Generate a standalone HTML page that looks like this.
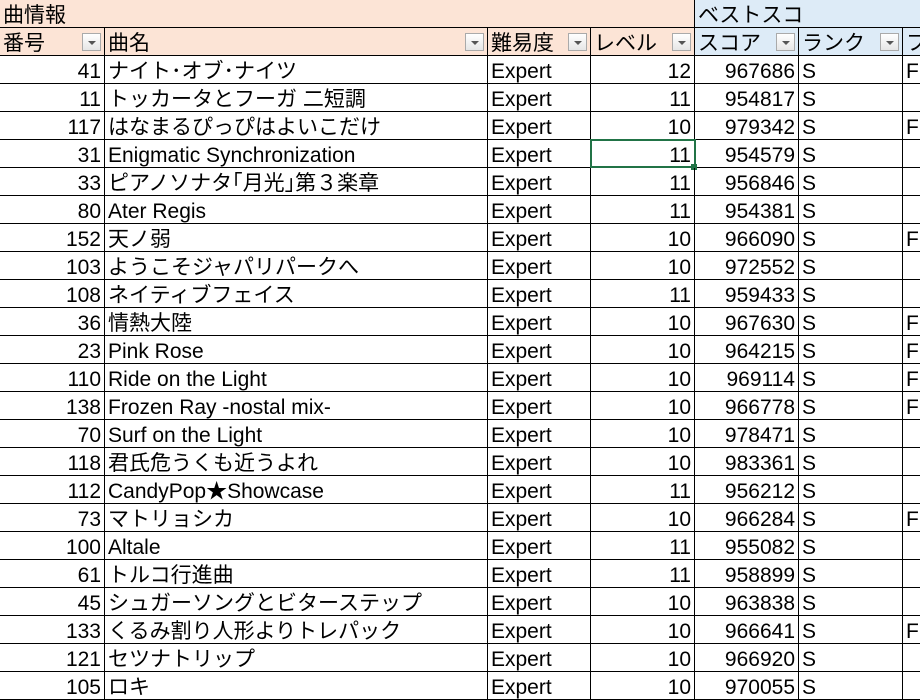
<!DOCTYPE html>
<html><head><meta charset="utf-8"><style>
body{margin:0;width:920px;height:680px;overflow:hidden;background:#fff;font-family:"Liberation Sans","Noto Sans CJK JP",sans-serif;font-size:21px;color:#000;position:relative}
.row{position:absolute;left:0;width:940px;height:28px;display:flex;box-sizing:border-box;border-bottom:1px solid #000}
.row>div{box-sizing:border-box;height:27px;border-right:1px solid #000;white-space:nowrap;overflow:hidden;line-height:31px;padding:0 3px;position:relative;flex:none}
.a{width:105px}.b{width:383px}.c{width:103px}.d{width:104px}.e{width:104px}.g{width:104px}.h{width:40px}
.r{text-align:right}
.h1{background:#fce4d6}
.h1 .bl{background:#ddebf7}
.h1>div{border-right:none!important}
.h1 .bl{border-left:1px solid #000}
.h2>div{background:#fce4d6}
.h2>div.bl{background:#ddebf7}
.f{position:absolute;right:3px;top:5px;width:19px;height:18px;box-sizing:border-box;border:1px solid #aaa;background:linear-gradient(#fff,#e6e6e6)}
.f:after{content:"";position:absolute;left:5px;top:7px;border-left:4px solid transparent;border-right:4px solid transparent;border-top:4px solid #555}
.sel{outline:2px solid #217346;outline-offset:-1px;overflow:visible!important}
.sel:after{content:"";position:absolute;right:-3px;bottom:-3px;width:6px;height:6px;background:#217346}
</style></head><body>
<div class="row h1" style="top:0"><div style="width:694px">曲情報</div><div class="bl" style="width:246px">ベストスコ</div></div>
<div class="row h2" style="top:28px"><div class="a">番号<span class="f"></span></div><div class="b">曲名<span class="f"></span></div><div class="c">難易度<span class="f"></span></div><div class="d">レベル<span class="f"></span></div><div class="e bl">スコア<span class="f"></span></div><div class="g bl">ランク<span class="f"></span></div><div class="h bl">フ</div></div>
<div id="rows"></div>
<script>
var d=[["41","ナイト･オブ･ナイツ","12","967686","F"],["11","トッカータとフーガ 二短調","11","954817",""],["117","はなまるぴっぴはよいこだけ","10","979342","F"],["31","Enigmatic Synchronization","11","954579",""],["33","ピアノソナタ｢月光｣第３楽章","11","956846",""],["80","Ater Regis","11","954381",""],["152","天ノ弱","10","966090","F"],["103","ようこそジャパリパークへ","10","972552",""],["108","ネイティブフェイス","11","959433",""],["36","情熱大陸","10","967630","F"],["23","Pink Rose","10","964215","F"],["110","Ride on the Light","10","969114","F"],["138","Frozen Ray -nostal mix-","10","966778","F"],["70","Surf on the Light","10","978471",""],["118","君氏危うくも近うよれ","10","983361",""],["112","CandyPop★Showcase","11","956212",""],["73","マトリョシカ","10","966284","F"],["100","Altale","11","955082",""],["61","トルコ行進曲","11","958899",""],["45","シュガーソングとビターステップ","10","963838",""],["133","くるみ割り人形よりトレパック","10","966641","F"],["121","セツナトリップ","10","966920",""],["105","ロキ","10","970055",""]];
var h="";d.forEach(function(x,i){h+='<div class="row" style="top:'+(56+28*i)+'px"><div class="a r">'+x[0]+'</div><div class="b">'+x[1]+'</div><div class="c">Expert</div><div class="d r'+(i==3?' sel':'')+'">'+x[2]+'</div><div class="e r">'+x[3]+'</div><div class="g">S</div><div class="h">'+x[4]+'</div></div>';});
document.getElementById("rows").innerHTML=h;
</script>
</body></html>
